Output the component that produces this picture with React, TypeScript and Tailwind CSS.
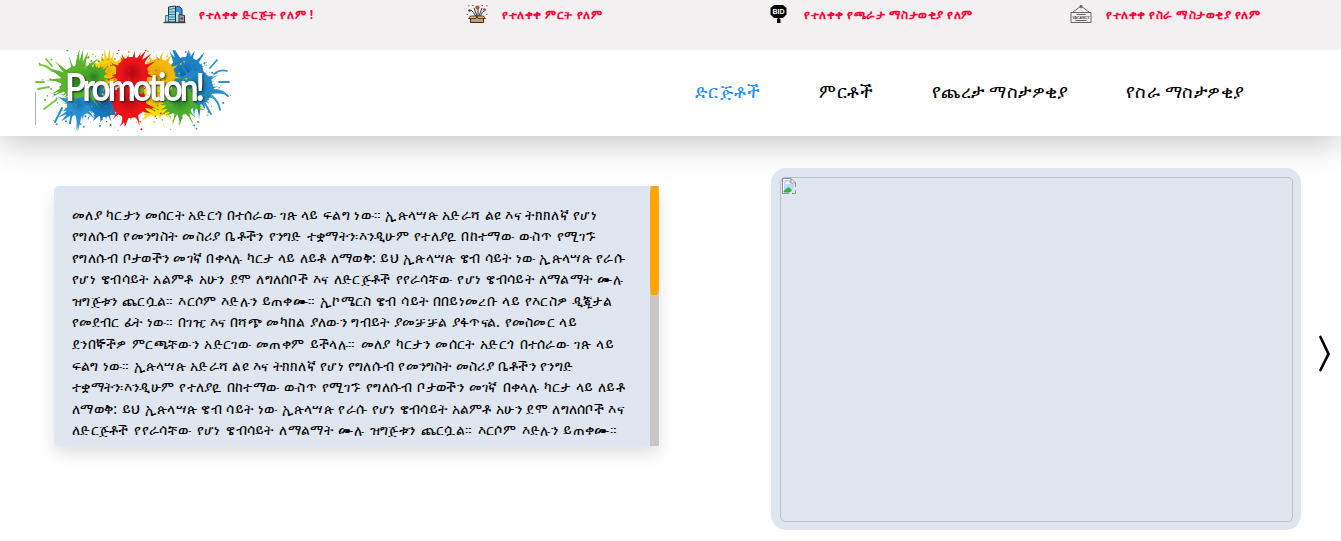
import React from "react";

const notices = [
  { text: "የተለቀቀ ድርጅት የለም !", icon: <BuildingIcon />, pad: "pl-[163px] w-[466px]", track: "tracking-[0.56px]" },
  { text: "የተለቀቀ ምርት የለም", icon: <BoxIcon />, pad: "w-[302px]", track: "tracking-[0.54px]" },
  { text: "የተለቀቀ የጫራታ ማስታወቂያ የለም", icon: <BidIcon />, pad: "w-[302px]", track: "tracking-[0.5px]" },
  { text: "የተለቀቀ የስራ ማስታወቂያ የለም", icon: <VacancyIcon />, pad: "", track: "tracking-[0.5px]" },
];

const lines = [
  { w: "w-[525px]", text: "መለያ ካርታን መሰርት አድርጎ በተሰራው ገጽ ላይ ፍልግ ነው። ኢጵላሣጵ አድራሻ ልዩ እና ትክክለኛ የሆነ" },
  { w: "w-[524px]", text: "የግለሱብ የመንግስት መስሪያ ቤቶችን የንግድ ተቋማትን፡እንዲሁም የተለያዪ በከተማው ውስጥ የሚገኙ" },
  { w: "w-[553px]", text: "የግለሱብ ቦታወችን መገኛ በቀላሉ ካርታ ላይ ለይቶ ለማወቅ: ይህ ኢጵላሣጵ ዌብ ሳይት ነው ኢጵላሣጵ የራሱ" },
  { w: "w-[551px]", text: "የሆነ ዌብሳይት አልምቶ አሁን ደሞ ለግለሰቦች እና ለድርጅቶች የየራሳቸው የሆነ ዌብሳይት ለማልማት ሙሉ" },
  { w: "w-[540px]", text: "ዝግጅቱን ጨርሷል። እርሶም እድሉን ይጠቀሙ። ኢኮሜርስ ዌብ ሳይት በበይነመረቡ ላይ የእርስዎ ዲጂታል" },
  { w: "w-[505px]", text: "የመደብር ፊት ነው። በገዢ እና በሻጭ መካከል ያለውን ግብይት ያመቻቻል ያፋጥናል. የመስመር ላይ" },
  { w: "w-[542px]", text: "ደንበኞችዎ ምርጫቸውን አድርገው መጠቀም ይችላሉ። መለያ ካርታን መሰርት አድርጎ በተሰራው ገጽ ላይ" },
  { w: "w-[501px] tracking-[0.2px]", text: "ፍልግ ነው። ኢጵላሣጵ አድራሻ ልዩ እና ትክክለኛ የሆነ የግለሱብ የመንግስት መስሪያ ቤቶችን የንግድ" },
  { w: "w-[553px]", text: "ተቋማትን፡እንዲሁም የተለያዪ በከተማው ውስጥ የሚገኙ የግለሱብ ቦታወችን መገኛ በቀላሉ ካርታ ላይ ለይቶ" },
  { w: "w-[552px]", text: "ለማወቅ: ይህ ኢጵላሣጵ ዌብ ሳይት ነው ኢጵላሣጵ የራሱ የሆነ ዌብሳይት አልምቶ አሁን ደሞ ለግለሰቦች እና" },
  { w: "w-[545px]", text: "ለድርጅቶች የየራሳቸው የሆነ ዌብሳይት ለማልማት ሙሉ ዝግጅቱን ጨርሷል። እርሶም እድሉን ይጠቀሙ።" },
];

function BuildingIcon() {
  return (
    <svg width="24" height="20" viewBox="0 0 24 20">
      <path d="M12 17V3q3-4 7 1v13z" fill="#3c8edb" stroke="#27343d" />
      <path d="M5.500 17V2l7-1v16z" fill="#9cdcf0" stroke="#27343d" />
      <path d="M13 7h3v10h-3z" fill="#b6e2f4" />
      <path d="M16 9.500l5.500 1V17H16z" fill="#98a4a8" stroke="#303030" />
      <path d="M2.500 10.500h3V17h-3z" fill="#9ad8ee" stroke="#405058" strokeWidth=".8" />
      <path d="M6 4.500l6-1M6 7h6M6 9.500h6M6 12h6M6 14.500h6" stroke="#315c73" strokeWidth=".8" />
      <path d="M0.500 17.500h22" stroke="#354544" strokeWidth="1.400" />
      <path d="M17.500 12.500h2.500v2h-2.500z" fill="#5a3d39" />
    </svg>
  );
}

function BoxIcon() {
  return (
    <svg width="24" height="20" viewBox="0 0 24 20">
      <path d="M9.500 11Q8 7 5 5M11 11L8 3M12 11V4M13 11l3-8M14.500 11q1-4 5-6" stroke="#383431" fill="none" />
      <path d="M4.500 11.500h13v6h-13z" fill="#d69a60" stroke="#3b291d" />
      <path d="M4.500 11L2.500 13.500h7.500l1-2.500 1 2.500h7.500L17.500 11z" fill="#e3ae78" stroke="#3b291d" strokeWidth=".8" />
      <circle cx="11.500" cy="2.500" r="1.700" fill="#e64c43" stroke="#6c3630" strokeWidth=".6" />
      <circle cx="3.500" cy="5.500" r="1.300" fill="#4c3732" />
      <circle cx="18.500" cy="4.500" r="1.300" fill="#b83f37" />
      <path d="M2 .8h1.500M6 .5h1.500M15.500.5H17M20 .8h1.500M.5 9.500H2M20 9.500h1.500" stroke="#69717a" />
    </svg>
  );
}

function BidIcon() {
  return (
    <svg width="20" height="20" viewBox="0 0 20 20">
      <path d="M6 0h9l3.500 3v6.500L15 13H6L2.500 9.500V3z" fill="#000" />
      <path d="M9.500 13h2v1h1v4H9v-4h.5z" fill="#000" />
      <text x="10.500" y="9" fill="#fff" fontFamily="Liberation Sans, sans-serif" fontWeight="700" fontSize="7" textAnchor="middle">BID</text>
    </svg>
  );
}

function VacancyIcon() {
  return (
    <svg width="24" height="20" viewBox="0 0 24 20" fill="none" stroke="#555" strokeWidth=".9">
      <path d="M1 7.500h20v10H1zM3 7l8-6 8 6" />
      <circle cx="11" cy="1.600" r="1.200" />
      <path d="M6.500 9.500h9M5.500 15.500h11" />
      <text x="11" y="13.700" fill="#333" stroke="none" fontFamily="Liberation Sans, sans-serif" fontWeight="700" fontSize="3.500" textAnchor="middle">VACANCY</text>
    </svg>
  );
}

function random(seed: number) {
  let s = seed;
  return () => {
    s = (s * 16807) % 2147483647;
    return s / 2147483647;
  };
}

type Blot = { x: number; y: number; r: number; reach: number; color: string; dark: string; seed: number };

const blots: Blot[] = [
  { x: 45, y: 54, r: 12, reach: 30, color: "#2a90cf", dark: "#1572b5", seed: 91 },
  { x: 70, y: 52, r: 15, reach: 24, color: "#1778bd", dark: "#125796", seed: 32 },
  { x: 152, y: 25, r: 18, reach: 34, color: "#1c82c3", dark: "#0a5da3", seed: 48 },
  { x: 162, y: 38, r: 17, reach: 32, color: "#2288c4", dark: "#0a5da3", seed: 411 },
  { x: 74, y: 22, r: 13, reach: 27, color: "#f9ce0a", dark: "#edae00", seed: 74 },
  { x: 124, y: 26, r: 17, reach: 26, color: "#f3b90a", dark: "#df9b02", seed: 29 },
  { x: 121, y: 51, r: 15, reach: 26, color: "#fddd0c", dark: "#e7a907", seed: 60 },
  { x: 43, y: 32, r: 16, reach: 36, color: "#59b32c", dark: "#267f20", seed: 15 },
  { x: 60, y: 27, r: 10, reach: 18, color: "#4ba827", dark: "#267f20", seed: 77 },
  { x: 146, y: 51, r: 14, reach: 28, color: "#4eac2c", dark: "#26812e", seed: 86 },
  { x: 98, y: 23, r: 16, reach: 28, color: "#ea1518", dark: "#b50710", seed: 19 },
  { x: 95, y: 51, r: 17, reach: 28, color: "#ea1318", dark: "#c00710", seed: 132 },
];

function Splash({ x, y, r, reach, color, dark, seed }: Blot) {
  const next = random(seed * 7919);
  const rays = Array.from({ length: 34 }, (_, i) => {
    const a = (i / 34) * Math.PI * 2 + (next() - 0.5) * 0.35;
    const len = r + (reach - r) * Math.pow(next(), 1.2);
    const w = 0.6 + next() * 1.4;
    const bend = (next() - 0.5) * 5;
    const c = Math.cos(a);
    const s = Math.sin(a);
    const base = r * 0.75;
    const mid = (base + len) / 2;
    return {
      d: `M${x + c * base - s * w * 2} ${y + s * base + c * w * 2}Q${x + c * mid - s * bend} ${y + s * mid + c * bend} ${x + c * len} ${y + s * len}Q${x + c * mid - s * (bend - w)} ${y + s * mid + c * (bend - w)} ${x + c * base + s * w * 2} ${y + s * base - c * w * 2}Z`,
      cx: x + c * (len + 2 + next() * 5),
      cy: y + s * (len + 2 + next() * 5),
      q: 0.2 + next() * 0.9,
    };
  });
  const id = `paint-${seed}`;
  return (
    <g fill={color}>
      <radialGradient id={id}>
        <stop offset="0" stopColor={dark} />
        <stop offset=".75" stopColor={color} />
        <stop offset="1" stopColor={color} />
      </radialGradient>
      {rays.map((ray, i) => (
        <React.Fragment key={i}>
          <path d={ray.d} />
          <circle cx={ray.cx} cy={ray.cy} r={ray.q} />
        </React.Fragment>
      ))}
      <circle cx={x} cy={y} r={r} fill={`url(#${id})`} />
    </g>
  );
}

function Logo() {
  return (
    <svg width="200" height="81" viewBox="0 0 200 81" className="block overflow-hidden">
      {blots.map((b) => <Splash key={b.seed} {...b} />)}
      <g fill="none" strokeLinecap="round" strokeWidth="1.800">
        <path d="M6 15q7 0 12 6M12 9l6 7M2 32h8M4 39l11-2M10 59l12-9" stroke="#78c63c" />
        <path d="M176 18l7-8M180 24q6-5 13-3M185 32h10M182 40q7 1 12 6M178 46q7 6 8 14M170 52l7 12" stroke="#2c93cb" />
        <path d="M28 58l-7 14M38 62l-2 11" stroke="#2288c5" />
      </g>
      <circle cx="62" cy="39" r="5" fill="#176eae" />
      <circle cx="106" cy="40" r="4" fill="#8b9d1b" />
      <path d="M1.500 42v33" stroke="#999" strokeWidth=".8" />
      <text
        x="31"
        y="51"
        textLength="137"
        lengthAdjust="spacingAndGlyphs"
        letterSpacing="-3.500"
        fontFamily="Lato, sans-serif"
        fontSize="39"
        fontWeight="700"
        fill="#fff"
        className="[filter:drop-shadow(1px_1px_1px_rgba(20,30,30,0.9))]"
      >
        Promotion!
      </text>
    </svg>
  );
}

function BrokenImageIcon() {
  return (
    <svg width="16" height="16" viewBox="0 0 16 16" className="block">
      <path d="M1.500.5H10L14.500 5v10.500h-13z" fill="#fff" />
      <path d="M3 2h7v4h3.500v8.500H3z" fill="#c3d5fa" />
      <path d="M4 6q0-1.500 1.500-1.500Q7 2.500 8 5q1.500 0 1.500 1z" fill="#fff" />
      <path d="M2.500 14.500v-1q3-4 5-4t5 5z" fill="#2fb344" />
      <path d="M8 15.500l6.500-7v3l-3.500 4z" fill="#e0e6f0" />
      <path d="M8 15.500H1.500V.5H10L14.500 5v4M10 .5V5h4.500M14.500 12v3.500H11" fill="none" stroke="#8e8e8e" />
    </svg>
  );
}

export default function App() {
  return (
    <div className="h-[541px] w-[1341px] overflow-hidden bg-white font-['Noto_Sans',sans-serif] text-black">
      <div className="relative z-10 flex h-[50px] items-start bg-[#f3f0f1] pt-[5px]">
        {notices.map((n) => (
          <div key={n.text} className={`flex shrink-0 items-start ${n.pad}`}>
            <div className="w-9 shrink-0">{n.icon}</div>
            <span className={`whitespace-nowrap text-[12px] leading-5 font-bold text-[#ff0033] ${n.track}`}>{n.text}</span>
          </div>
        ))}
      </div>
      <header className="flex h-[86px] items-start bg-white pl-[34px] shadow-[0_8px_32px_rgba(0,0,0,0.22)]">
        <Logo />
        <nav className="flex pt-[27px] pl-[461px] text-[17.6px] leading-7 whitespace-nowrap">
          <a className="w-[123.5px] tracking-[1.25px] text-[#1e90ff]">ድርጅቶች</a>
          <a className="w-[113.5px] tracking-[1.2px]">ምርቶች</a>
          <a className="w-[194px] tracking-[0.38px]">የጨረታ ማስታዎቂያ</a>
          <a className="tracking-[0.38px]">የስራ ማስታዎቂያ</a>
        </nav>
      </header>
      <main className="flex items-start">
        <section className="mt-[50px] ml-[54px] flex h-[260px] w-[605px] shrink-0 overflow-hidden rounded-l-[5px] bg-[#e0e6f0] shadow-[0_8px_16px_rgba(0,0,0,0.12)]">
          <div className="w-[596px] shrink-0 pt-[17.5px] pl-[18px] text-[14.4px] leading-[21.6px] tracking-[0.3px]">
            {lines.map((line, i) => (
              <p key={i} className={`h-[21.6px] whitespace-normal [text-align-last:justify] ${line.w}`}>{line.text}</p>
            ))}
          </div>
          <div className="w-[9px] bg-[#c8c7c5]">
            <div className="h-[109px] rounded-[2px/14px] bg-[#ffa500]" />
          </div>
        </section>
        <section className="mt-[32px] ml-[112px] h-[362px] w-[530px] shrink-0 rounded-[15px] bg-[#e0e6f0] p-[9px]">
          <div className="h-[345px] w-[513px] rounded-[5px] border border-[#c0c0c0]">
            <BrokenImageIcon />
          </div>
        </section>
        <svg width="14" height="38" viewBox="0 0 14 38" className="mt-[199px] ml-[16.5px]">
          <path d="M2.500 2l8 17-8 16" fill="none" stroke="#000" strokeWidth="2.700" strokeLinecap="round" strokeLinejoin="round" />
        </svg>
      </main>
    </div>
  );
}
